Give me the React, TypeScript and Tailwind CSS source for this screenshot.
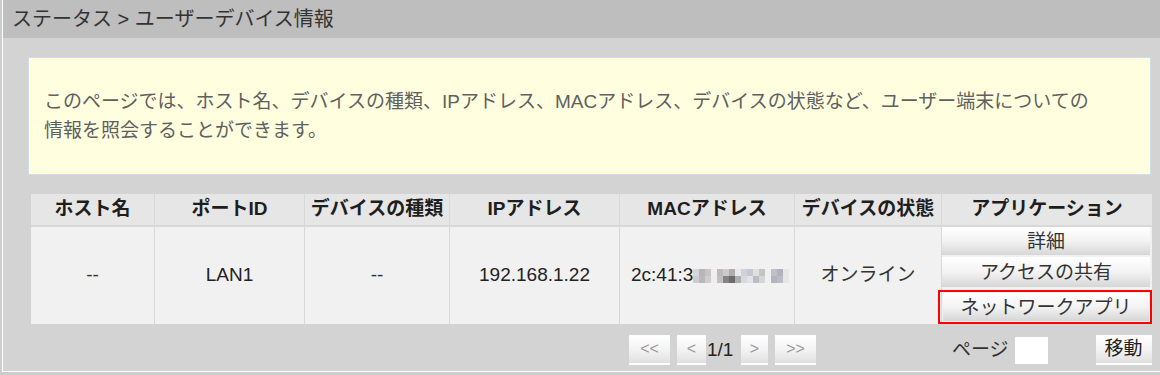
import * as React from "react"

const font = "font-['Liberation_Sans','Noto_Sans_CJK_JP',sans-serif]"

const mosaicTop = [
  "#d6d6da", "#b8b3b7", "#c8c4c8", "#efefef", "#bdb9bd", "#cdc9cd", "#aeaeae", "#e9e9e9",
  "#ced2da", "#c4c8d0", "#dfdfdf", "#c4c4c4", "#f0f0f0", "#c0c0c8", "#b3b3bf", "#e6e6e6",
]
const mosaicBottom = [
  "#cdcdd1", "#bcb8b8", "#d1cdcd", "#eeeeee", "#c4c0c0", "#848484", "#6c6c6c", "#adadad",
  "#d5d9e1", "#dfe3e7", "#bcbcc4", "#d5d5d5", "#f0f0f0", "#b4b4c0", "#bcbcc8", "#e6e6e6",
]

const MacMosaic = () => {
  return (
    <span className="inline-flex flex-col">
      <span className="flex">
        {mosaicTop.map((c, i) => (
          <span key={i} className="h-[7px] w-[6px]" style={{ backgroundColor: c }} />
        ))}
      </span>
      <span className="flex">
        {mosaicBottom.map((c, i) => (
          <span key={i} className="h-[7px] w-[6px]" style={{ backgroundColor: c }} />
        ))}
      </span>
    </span>
  )
}

const AppButton = ({ children, className }: { children: React.ReactNode; className: string }) => {
  return (
    <button
      className={
        "flex w-full items-center justify-center bg-linear-to-b from-white via-[#f3f3f3] to-[#d6d6d6] text-[19px] leading-none text-[#333] " +
        className
      }
    >
      {children}
    </button>
  )
}

// pager buttons: size and colour come in through className
const PageButton = ({ children, className }: { children: React.ReactNode; className: string }) => {
  return (
    <button
      className={
        "flex h-[30px] items-center justify-center border-b-2 border-b-white bg-linear-to-b from-white via-[#f4f4f4] to-[#e0e0e0] " +
        className
      }
    >
      {children}
    </button>
  )
}

const headers = ["ホスト名", "ポートID", "デバイスの種類", "IPアドレス", "MACアドレス", "デバイスの状態", "アプリケーション"]

export default function App() {
  return (
    <div className={"flex h-[375px] w-[1160px] overflow-hidden bg-[#cdcdcd] " + font}>
      <div className="ml-[2px] flex h-[372px] flex-1 flex-col border-b border-l border-white bg-[#d3d3d3]">
        <div className="flex h-[38px] shrink-0 items-center bg-[#bebebe] pl-[9px] text-[20px] text-[#333]">
          ステータス &gt; ユーザーデバイス情報
        </div>

        <div className="ml-[25px] mt-[19px] flex h-[118px] w-[1123px] items-center border border-[#cfdde6] bg-[#ffffe0] pl-[15px] text-[19px] leading-[29px] text-[#606060]">
          <p>
            このページでは、ホスト名、デバイスの種類、IPアドレス、MACアドレス、デバイスの状態など、ユーザー端末についての
            <br />
            情報を照会することができます。
          </p>
        </div>

        <div className="ml-[28px] mt-[19px] grid w-[1121px] grid-cols-[123px_150px_145px_170px_175px_147px_211px]">
          {headers.map((h, i) => (
            <div
              key={h}
              className={
                "flex h-[33px] items-center justify-center border-b-2 border-[#d8d8d8] bg-[#e6e6e6] text-[19px] font-bold text-[#1e1e1e] " +
                (i > 0 ? "border-l" : "")
              }
            >
              {h}
            </div>
          ))}

          <div className="flex h-[97px] items-center justify-center bg-[#f1f1f1] text-[19px] text-[#333]">--</div>
          <div className="flex h-[97px] items-center justify-center border-l border-[#d8d8d8] bg-[#f1f1f1] text-[19px] text-[#222]">
            LAN1
          </div>
          <div className="flex h-[97px] items-center justify-center border-l border-[#d8d8d8] bg-[#f1f1f1] text-[19px] text-[#333]">--</div>
          <div className="flex h-[97px] items-center justify-center border-l border-[#d8d8d8] bg-[#f1f1f1] text-[19px] text-[#222]">
            192.168.1.22
          </div>
          <div className="flex h-[97px] items-center border-l border-[#d8d8d8] bg-[#f1f1f1] pl-[11px] text-[19px] text-[#222]">
            <span>2c:41:3</span>
            <MacMosaic />
          </div>
          <div className="flex h-[97px] items-center justify-center border-l border-[#d8d8d8] bg-[#f1f1f1] text-[19px] text-[#333]">
            オンライン
          </div>
          <div className="flex h-[97px] flex-col border-l border-[#d8d8d8] bg-[#f1f1f1] pr-[2px]">
            <AppButton className="h-[28px]">詳細</AppButton>
            <AppButton className="mt-[2px] h-[30px]">アクセスの共有</AppButton>
            <div className="-ml-[4px] mr-[-2px] mt-[3px] h-[34px] border-2 border-[#ff0000] p-[1px] pl-[3px]">
              <AppButton className="h-full">ネットワークアプリ</AppButton>
            </div>
          </div>
        </div>

        <div className="mt-[11px] flex h-[30px] items-center">
          <div className="ml-[626px] flex items-center">
            <PageButton className="w-[41px] text-[16px] text-[#999]">&lt;&lt;</PageButton>
            <PageButton className="ml-[7px] w-[29px] text-[16px] text-[#999]">&lt;</PageButton>
            <span className="w-[35px] pl-px text-[19px] text-[#222]">1/1</span>
            <PageButton className="w-[27px] text-[16px] text-[#999]">&gt;</PageButton>
            <PageButton className="ml-[7px] w-[41px] text-[16px] text-[#999]">&gt;&gt;</PageButton>
          </div>
          <span className="ml-[136px] text-[19px] text-[#333]">ページ</span>
          <input className="ml-[6px] h-[27px] w-[33px] bg-white outline-none" />
          <PageButton className="ml-[48px] w-[56px] text-[19px] text-[#222]">移動</PageButton>
        </div>
      </div>
    </div>
  )
}
